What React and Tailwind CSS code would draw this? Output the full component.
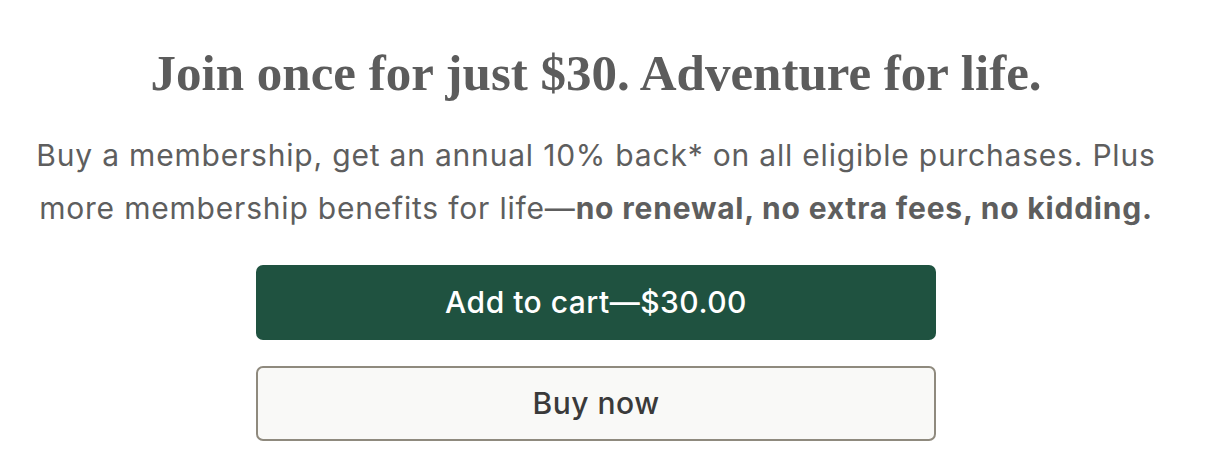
export default function App() {
    return (
        <div className="w-[1192px] h-[462px] bg-white flex flex-col items-center pt-[42px]">
            <h1 className="text-[51px] leading-[62px] font-bold text-[#5c5c5c] font-['Liberation_Serif',serif]">
                Join once for just $30. Adventure for life.
            </h1>
            <p className="mt-[25px] text-center text-[30px] leading-[53px] tracking-[0.8px] text-[#5e5e5e] font-['Inter',sans-serif]">
                Buy a membership, get an annual 10% back* on all eligible purchases. Plus
                <br />
                more membership benefits for life—<span className="font-bold">no renewal, no extra fees, no kidding.</span>
            </p>
            <div className="mt-[30px] flex flex-col gap-[26px] w-[680px] font-['Inter',sans-serif]">
                <button className="h-[75px] rounded-[7px] bg-[#1f5240] text-white text-[30px] tracking-[0.5px] font-medium">
                    Add to cart—$30.00
                </button>
                <button className="h-[75px] rounded-[7px] border-2 border-[#8f8a7e] bg-[#f9f9f7] text-[#3a3a3a] text-[30px] tracking-[0.5px] font-medium">
                    Buy now
                </button>
            </div>
        </div>
    );
}
